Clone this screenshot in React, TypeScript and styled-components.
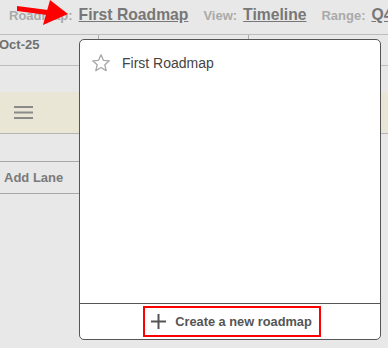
import React from 'react';
import styled, { createGlobalStyle } from 'styled-components';

const GlobalStyle = createGlobalStyle`
  html, body {
    margin: 0;
    padding: 0;
    background: #e8e8e8;
    font-family: "Liberation Sans", Arial, sans-serif;
  }
`;

const Page = styled.div`
  position: relative;
  width: 388px;
  height: 348px;
  overflow: hidden;
  background: #e8e8e8;
`;

const TopBar = styled.div`
  display: flex;
  align-items: center;
  height: 30px;
  padding: 0 0 4px 9px;
  white-space: nowrap;
  overflow: hidden;
  border-bottom: 1px solid #bdbdbd;
`;

const Field = styled.div`
  display: flex;
  align-items: baseline;
  gap: 6px;
  margin-right: 15px;
`;

const Label = styled.span`
  font-size: 13px;
  font-weight: bold;
  color: #aaa;
`;

const Value = styled.span`
  font-size: 15.7px;
  font-weight: bold;
  color: #777;
  text-decoration: underline;
`;

const MonthRow = styled.div`
  display: grid;
  grid-template-columns: 98px 150px 1fr;
  height: 30px;
  border-bottom: 1px solid #bdbdbd;
`;

const Month = styled.div<{ $first?: boolean }>`
  font-size: 13px;
  font-weight: bold;
  color: #707070;
  padding-top: 2px;
  text-align: ${p => (p.$first ? 'left' : 'center')};
  border-left: ${p => (p.$first ? 'none' : '1px solid #aaa')};
  margin-left: ${p => (p.$first ? '-1px' : '0')};
`;

const Spacer = styled.div<{ $h: number }>`
  height: ${p => p.$h}px;
`;

const Band = styled.div`
  height: 41px;
  background: #e9e6d6;
  border-bottom: 1px solid #b4b4b4;
  display: flex;
  align-items: center;
  padding-left: 14px;
`;

const Lane = styled.div`
  width: 79px;
  height: 27px;
  border-bottom: 1px solid #a8a8a8;
`;

const AddLane = styled.div`
  width: 75px;
  height: 31px;
  padding-left: 4px;
  display: flex;
  align-items: center;
  font-size: 13px;
  font-weight: bold;
  color: #7a7a7a;
  border-bottom: 1px solid #a8a8a8;
`;

const Popup = styled.div`
  position: absolute;
  left: 79px;
  top: 39px;
  width: 300px;
  height: 299px;
  background: #fff;
  border: 1px solid #555;
  border-radius: 5px;
  display: flex;
  flex-direction: column;
`;

const List = styled.div`
  flex: 1;
  padding-top: 11px;
`;

const Item = styled.div`
  display: flex;
  align-items: center;
  gap: 11px;
  padding-left: 11px;
  height: 24px;
  font-size: 14px;
  color: #444;
`;

const Footer = styled.div`
  height: 35px;
  border-top: 1px solid #555;
  display: flex;
  justify-content: center;
  align-items: center;
`;

const CreateButton = styled.div`
  display: flex;
  align-items: center;
  gap: 9px;
  height: 27px;
  padding: 0 7px 0 6px;
  border: 2px solid #f00;
  font-size: 12.8px;
  font-weight: bold;
  color: #555;
  margin-left: 4px;
`;

const Arrow = styled.svg`
  position: absolute;
  left: 0;
  top: 0;
`;

const Star = () => (
  <svg width="20" height="20" viewBox="0 0 24 24">
    <path
      d="M12 2.2l2.9 6.6 7.1.6-5.4 4.7 1.6 7-6.2-3.7-6.2 3.7 1.6-7L2 9.4l7.1-.6z"
      fill="none"
      stroke="#a8a8a8"
      strokeWidth="1.6"
      strokeLinejoin="round"
    />
  </svg>
);

const Hamburger = () => (
  <svg width="19" height="13" viewBox="0 0 19 13">
    <rect y="0" width="19" height="2" fill="#8a8a8a" />
    <rect y="5.5" width="19" height="2" fill="#8a8a8a" />
    <rect y="11" width="19" height="2" fill="#8a8a8a" />
  </svg>
);

const Plus = () => (
  <svg width="15" height="15" viewBox="0 0 15 15">
    <rect x="6.5" y="0" width="2" height="15" fill="#555" />
    <rect x="0" y="6.5" width="15" height="2" fill="#555" />
  </svg>
);

const App: React.FC = () => (
  <>
    <GlobalStyle />
    <Page>
      <TopBar>
        <Field>
          <Label>Roadmap:</Label>
          <Value>First Roadmap</Value>
        </Field>
        <Field>
          <Label>View:</Label>
          <Value>Timeline</Value>
        </Field>
        <Field>
          <Label>Range:</Label>
          <Value>Q4</Value>
        </Field>
      </TopBar>
      <MonthRow>
        <Month $first>Oct-25</Month>
        <Month>Nov-25</Month>
        <Month>Dec-25</Month>
      </MonthRow>
      <Spacer $h={26} />
      <Band>
        <Hamburger />
      </Band>
      <Lane />
      <AddLane>Add Lane</AddLane>

      <Arrow width="72" height="28" viewBox="0 0 72 28">
        <polygon points="17,6 48,10 47,15 17,11" fill="#f00" />
        <polygon points="50,0 68,14 43,25" fill="#f00" />
      </Arrow>

      <Popup>
        <List>
          <Item>
            <Star />
            First Roadmap
          </Item>
        </List>
        <Footer>
          <CreateButton>
            <Plus />
            Create a new roadmap
          </CreateButton>
        </Footer>
      </Popup>
    </Page>
  </>
);

export default App;
